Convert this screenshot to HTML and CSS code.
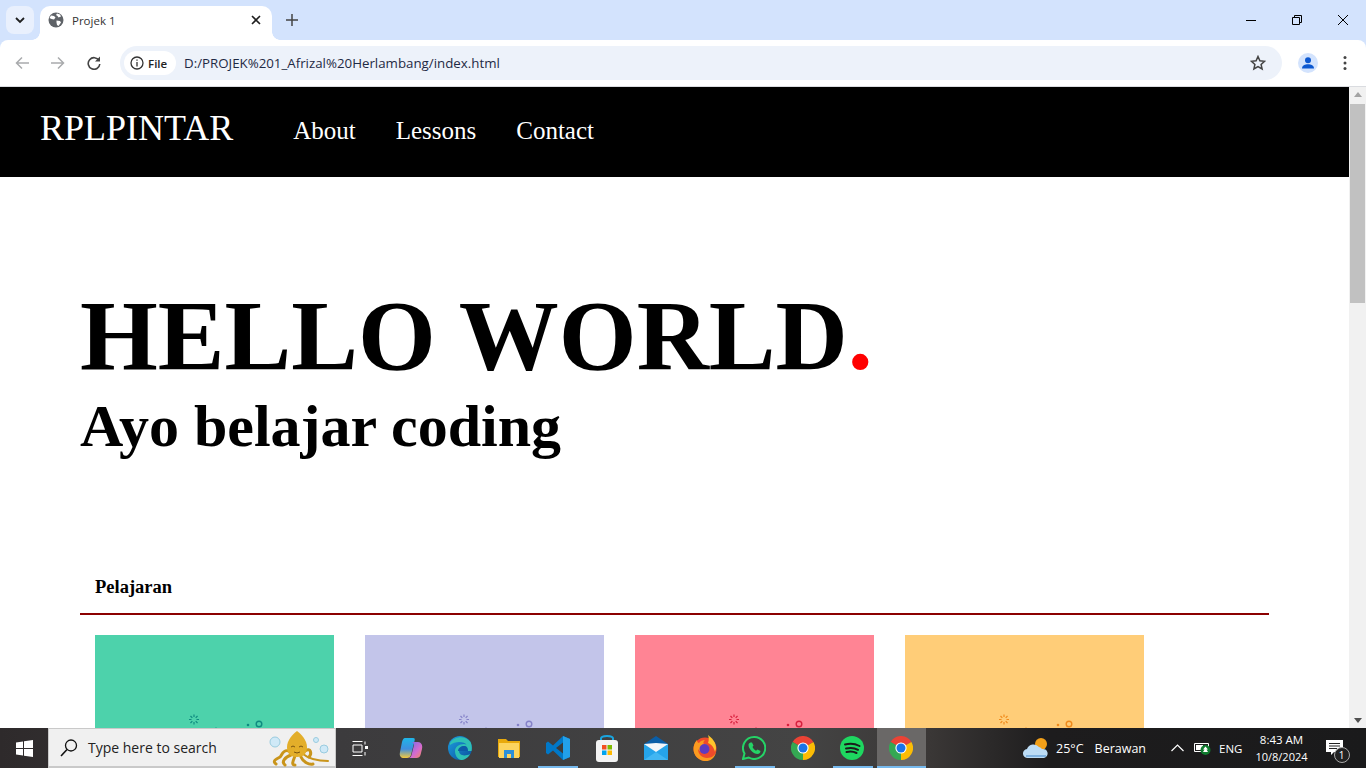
FILE: index.html
```html
<!DOCTYPE html>
<html>
<head>
    <title>Projek 1</title>
    <link rel="stylesheet" href="styles.css">
</head>
<body>
    <svg class="defs" width="0" height="0">
        <symbol id="chrome" viewBox="0 0 24 24">
            <path fill="#ea4335" d="M12 12 L1.600 6 A12 12 0 0 1 22.400 6 Z"/>
            <path fill="#fbbc05" d="M12 12 L22.400 6 A12 12 0 0 1 12 24 Z"/>
            <path fill="#34a853" d="M12 12 L12 24 A12 12 0 0 1 1.600 6 Z"/>
            <circle cx="12" cy="12" r="5.600" fill="#fff"/>
            <circle cx="12" cy="12" r="4.500" fill="#1a73e8"/>
        </symbol>
        <symbol id="deco" viewBox="0 0 240 100">
            <g fill="none" stroke="currentColor" stroke-width="1.200">
                <path d="M99 79.500v2.500M99 87v2.500M94 84.500h2.500M101.500 84.500h2.500M95.500 81l1.800 1.800M100.700 86.200l1.800 1.800M95.500 88l1.800-1.800M100.700 82.800l1.800-1.800"/>
                <circle cx="164" cy="89" r="2.800" stroke-width="1.400"/>
            </g>
            <circle cx="153" cy="90" r="1.300" fill="currentColor"/>
            <circle cx="121" cy="93" r="1" fill="currentColor" opacity=".4"/>
        </symbol>
    </svg>

    <div class="browser">
        <div class="tabstrip">
            <div class="tab-search">
                <svg width="12" height="12" viewBox="0 0 12 12"><path d="M2 4l4 4 4-4" fill="none" stroke="#1f1f1f" stroke-width="1.800"/></svg>
            </div>
            <div class="tab">
                <svg class="tab-icon" width="16" height="16" viewBox="0 0 16 16">
                    <circle cx="8" cy="8" r="7.500" fill="#5f6368"/>
                    <path fill="#fff" d="M3 3.500l3 .5 1.500 1.500L6 7.500 3.500 7 1.500 6zM9 1.500l3 1 1 2-2.500 1-1-1.500-1.500-1zM8.500 8.500l3.500.5 1 1.500-2.500 3.500-1.500-1-.5-2.500z"/>
                </svg>
                <span class="tab-title">Projek 1</span>
                <svg class="tab-close" width="10" height="10" viewBox="0 0 10 10"><path d="M1 1l8 8M9 1l-8 8" stroke="#1f1f1f" stroke-width="1.600"/></svg>
            </div>
            <svg class="new-tab" width="12" height="12" viewBox="0 0 12 12"><path d="M6 0v12M0 6h12" stroke="#444" stroke-width="1.500"/></svg>
            <div class="window-btns">
                <svg width="10" height="10" viewBox="0 0 10 10"><path d="M0 5.500h10" stroke="#000"/></svg>
                <svg width="10" height="10" viewBox="0 0 10 10"><path d="M.5 2.500h7v7h-7zM2.500 2.500v-2h7v7h-2" fill="none" stroke="#000"/></svg>
                <svg width="10" height="10" viewBox="0 0 10 10"><path d="M0 0l10 10M10 0L0 10" stroke="#000"/></svg>
            </div>
        </div>

        <div class="toolbar">
            <svg class="tool-icon first" width="14" height="14" viewBox="0 0 14 14"><path d="M14 7H2M7 1.500L1.500 7 7 12.500" fill="none" stroke="#a9abad" stroke-width="1.500"/></svg>
            <svg class="tool-icon" width="14" height="14" viewBox="0 0 14 14"><path d="M0 7h12M7 1.500L12.500 7 7 12.500" fill="none" stroke="#a9abad" stroke-width="1.500"/></svg>
            <svg class="tool-icon" width="14" height="14" viewBox="0 0 14 14"><path d="M12 4.500A5.800 5.800 0 1 0 12.800 8" fill="none" stroke="#444" stroke-width="1.600"/><path d="M13 .5v5H8z" fill="#444"/></svg>
            <div class="omnibox">
                <div class="chip">
                    <svg width="14" height="14" viewBox="0 0 14 14"><circle cx="7" cy="7" r="6" fill="none" stroke="#333" stroke-width="1.300"/><path d="M7 6v4.500M7 3.500v1.300" stroke="#333" stroke-width="1.300"/></svg>
                    <span>File</span>
                </div>
                <span class="url">D:/PROJEK%201_Afrizal%20Herlambang/index.html</span>
                <svg class="star" width="16" height="16" viewBox="0 0 16 16"><path d="M8 1.500l1.900 4.300 4.600.5-3.400 3.100 1 4.600L8 11.600l-4.100 2.400 1-4.600L1.500 6.300l4.600-.5z" fill="none" stroke="#444" stroke-width="1.500"/></svg>
            </div>
            <div class="profile">
                <svg width="20" height="20" viewBox="0 0 20 20"><circle cx="10" cy="10" r="10" fill="#d3e3fd"/><circle cx="10" cy="7.300" r="3" fill="#0b57d0"/><path d="M4 15.500c0-3 3-4.300 6-4.300s6 1.300 6 4.300z" fill="#0b57d0"/></svg>
            </div>
            <svg class="menu" width="4" height="16" viewBox="0 0 4 16"><circle cx="2" cy="2.500" r="1.500" fill="#444"/><circle cx="2" cy="8" r="1.500" fill="#444"/><circle cx="2" cy="13.500" r="1.500" fill="#444"/></svg>
        </div>

        <div class="viewport">
            <div class="page">
                <nav class="navbar">
                    <a class="logo">RPLPINTAR</a>
                    <ul class="nav-links">
                        <li>About</li>
                        <li>Lessons</li>
                        <li>Contact</li>
                    </ul>
                </nav>

                <section class="hero">
                    <h1>HELLO WORLD<span class="dot">.</span></h1>
                    <h2>Ayo belajar coding</h2>
                </section>

                <section class="lessons">
                    <h3>Pelajaran</h3>
                    <div class="cards">
                        <div class="card green"><svg class="deco"><use href="#deco"/></svg></div>
                        <div class="card purple"><svg class="deco"><use href="#deco"/></svg></div>
                        <div class="card red"><svg class="deco"><use href="#deco"/></svg></div>
                        <div class="card yellow"><svg class="deco"><use href="#deco"/></svg></div>
                    </div>
                </section>
            </div>
            <div class="scrollbar">
                <div class="arrow up"></div>
                <div class="thumb"></div>
                <div class="arrow down"></div>
            </div>
        </div>

        <div class="taskbar">
            <div class="start">
                <svg width="17" height="17" viewBox="0 0 17 17"><path fill="#fff" d="M0 2.400l7-1v6.600H0zM8 1.300L17 0v8H8zM0 9h7v6.600l-7-1zM8 9h9v8l-9-1.300z"/></svg>
            </div>
            <div class="search">
                <svg width="20" height="20" viewBox="0 0 20 20"><circle cx="12" cy="7.500" r="5.500" fill="none" stroke="#111" stroke-width="1.300"/><path d="M8 11.500L2 18" stroke="#111" stroke-width="1.600"/></svg>
                <span>Type here to search</span>
                <svg class="octopus" width="66" height="38" viewBox="0 0 66 38">
                    <circle cx="10" cy="13" r="5" fill="#cfe9f7" stroke="#9accdf"/>
                    <circle cx="51" cy="11" r="2.500" fill="#cfe9f7" stroke="#9accdf"/>
                    <circle cx="59" cy="20" r="4" fill="#cfe9f7" stroke="#9accdf"/>
                    <g fill="none" stroke="#c9941a" stroke-width="3" stroke-linecap="round">
                        <path d="M24 22C18 20 17 26 15 28 11 30 7 32 11 35"/>
                        <path d="M26 26C20 28 16 33 20 36"/>
                        <path d="M30 27C28 32 26 36 30 36"/>
                        <path d="M40 22C46 18 47 25 44 28"/>
                        <path d="M36 28C38 33 44 36 48 35"/>
                    </g>
                    <path d="M38 25C44 30 52 32 63 32" fill="none" stroke="#c9941a" stroke-width="2" stroke-linecap="round"/>
                    <path d="M32 2C36 5 42 11 42 18 42 25 38 28 32 28 26 28 22 25 22 18 22 11 28 5 32 2z" fill="#e3ae2a"/>
                    <path d="M26 18q2-2 4 0M34 18q2-2 4 0M29 23q3 2 6 0" fill="none" stroke="#7a5510"/>
                </svg>
            </div>
            <div class="task-view">
                <svg width="16" height="15" viewBox="0 0 16 15"><path d="M.5 .5h10M.5 14.500h10M1 4h9v7H1z" fill="none" stroke="#fff"/><path d="M13 .5v3M13 11v3.500" stroke="#fff"/><rect x="13" y="5" width="3" height="3" fill="#fff"/></svg>
            </div>
            <div class="apps">
                <div class="app">
                    <svg width="24" height="24" viewBox="0 0 24 24">
                        <defs>
                            <linearGradient id="copa" x1="0" y1="0" x2="0" y2="1"><stop offset="0" stop-color="#1fb6e8"/><stop offset=".55" stop-color="#3f8fe0"/><stop offset="1" stop-color="#f4c93c"/></linearGradient>
                            <linearGradient id="copb" x1="0" y1="0" x2="1" y2="1"><stop offset="0" stop-color="#6a6ae8"/><stop offset=".6" stop-color="#d56bd0"/><stop offset="1" stop-color="#f58a5c"/></linearGradient>
                        </defs>
                        <path d="M6 2h8c2 0 2 1 1.500 3L12 19c-.5 2-2 3-4 3H5c-3 0-5-2-4-6l2-10c.5-2 1.500-4 3-4z" fill="url(#copa)"/>
                        <path d="M12 6h7c3 0 5 3 4 7l-1.500 6c-.5 2-2 3-4 3H9c2 0 3-1 3.500-3L15 9c.3-1.500-1-3-3-3z" fill="url(#copb)"/>
                    </svg>
                </div>
                <div class="app">
                    <svg width="24" height="24" viewBox="0 0 24 24">
                        <defs><linearGradient id="edg" x1="0" y1="0" x2="1" y2="1"><stop offset="0" stop-color="#1d9fe0"/><stop offset="1" stop-color="#0b4f9c"/></linearGradient></defs>
                        <circle cx="12" cy="12" r="12" fill="url(#edg)"/>
                        <path d="M2 7C6 0 18-1 22.500 6 24 9 24 13 23.500 15H11c0 4 5 6 11 3-2 4-6 6-9 6-4-1-6-5-6-9 0-4 4-7 9-7 2 0 3 1 3 1-3-4-12-4-17 0z" fill="#2fc0b5"/>
                        <path d="M10 15c0-3 3-5 6-5 3 0 4 2 4 5z" fill="#0d5ba8"/>
                    </svg>
                </div>
                <div class="app">
                    <svg width="22" height="22" viewBox="0 0 22 22">
                        <path d="M0 2h8l2 2h12v16H0z" fill="#e8a90c"/>
                        <path d="M1 6h20v15H1z" fill="#fcd45f"/>
                        <path d="M6 13h10v8h-3v-4H9v4H6z" fill="#2c8fd8"/>
                    </svg>
                </div>
                <div class="app underlined">
                    <svg width="24" height="24" viewBox="0 0 24 24">
                        <path d="M17 0l7 3v18l-7 3L7 14.500 2 18.500 0 17v-10l2-1.500 5 4z" fill="#0078c8"/>
                        <path d="M17 0l7 3v18l-7 3z" fill="#22a0ea"/>
                        <path d="M17 6.500L10 12l7 5.500z" fill="#3b3b3b"/>
                    </svg>
                </div>
                <div class="app">
                    <svg width="24" height="28" viewBox="0 0 24 28">
                        <path d="M6 7V4.500C6 1 18 1 18 4.500V7" fill="none" stroke="#19a5e0" stroke-width="2"/>
                        <rect x="1" y="6" width="22" height="22" rx="3" fill="#f3f3f3"/>
                        <rect x="7" y="11" width="4.500" height="4.500" fill="#f25022"/>
                        <rect x="12.500" y="11" width="4.500" height="4.500" fill="#7fba00"/>
                        <rect x="7" y="16.500" width="4.500" height="4.500" fill="#00a4ef"/>
                        <rect x="12.500" y="16.500" width="4.500" height="4.500" fill="#ffb900"/>
                    </svg>
                </div>
                <div class="app">
                    <svg width="24" height="24" viewBox="0 0 24 24">
                        <path d="M12 0l12 8v16H0V8z" fill="#0a5ea8"/>
                        <path d="M0 8h24v16H0z" fill="#25a4ea"/>
                        <path d="M0 8l12 8 12-8-12-1z" fill="#f3f6fa"/>
                        <path d="M0 24l12-8 12 8z" fill="#41b6f2"/>
                    </svg>
                </div>
                <div class="app">
                    <svg width="24" height="26" viewBox="0 0 24 26">
                        <circle cx="12" cy="14" r="11.500" fill="#ee4b2b"/>
                        <path d="M.5 14C.5 9 3 6 4 5c0 2 1 3 2 3 1-2 4-3 6-3-2 2-2 3-1 4 3 0 6 3 5 6-3 4-9 3-11-1 0 5 4 9 9 9 5 0 8-3 9-6-1 6-6 10-12 9C5 25 .5 20 .5 14z" fill="#fb9b1f"/>
                        <path d="M15 0c4 3 8 7 8 13 0 2-1 3-1 4-1-5-4-8-7-9 1-3 1-5 0-8z" fill="#fdc52c"/>
                        <circle cx="11.500" cy="14" r="5" fill="#5e3bbf"/>
                    </svg>
                </div>
                <div class="app underlined">
                    <svg width="24" height="24" viewBox="0 0 24 24">
                        <path d="M12 1a11 11 0 0 0-9.500 16.500L1 23l5.700-1.500A11 11 0 1 0 12 1z" fill="#3b3b3b" stroke="#25d366" stroke-width="2"/>
                        <path d="M8.500 6.500l1.500 0 1.500 3-1 1.500c1 2 2 3 3.500 3.700l1.500-1.200 3 1.500c0 2-1.500 3-3 3-4 0-9-5-9-9 0-1 .7-2 2-2.500z" fill="#25d366"/>
                    </svg>
                </div>
                <div class="app"><svg width="24" height="24"><use href="#chrome"/></svg></div>
                <div class="app underlined">
                    <svg width="24" height="24" viewBox="0 0 24 24">
                        <circle cx="12" cy="12" r="12" fill="#1ed760"/>
                        <path d="M5 8.500c5-1.500 10-1 14.500 1.500M6 12.500c4.500-1 8.500-.7 12 1.300M6.500 16c3.500-.8 7-.6 10 1" fill="none" stroke="#1b1b1b" stroke-width="2" stroke-linecap="round"/>
                    </svg>
                </div>
                <div class="app active"><svg width="24" height="24"><use href="#chrome"/></svg></div>
            </div>
            <div class="tray">
                <svg class="weather" width="26" height="24" viewBox="0 0 26 24">
                    <circle cx="18" cy="8" r="6" fill="#f2a019"/>
                    <path d="M5 22a4.500 4.500 0 0 1-1-9 7 7 0 0 1 12-2 4.500 4.500 0 0 1 3 2 4.500 4.500 0 0 1 2 9z" fill="#bcdcf5"/>
                    <path d="M3 20h20" stroke="#7fb2e0" stroke-width="2"/>
                </svg>
                <span class="temp">25°C</span>
                <span class="cond">Berawan</span>
                <svg class="caret" width="13" height="8" viewBox="0 0 13 8"><path d="M.5 7l6-6 6 6" fill="none" stroke="#fff" stroke-width="1.200"/></svg>
                <svg class="battery" width="17" height="14" viewBox="0 0 17 14">
                    <path d="M.5 2.500h14v8H.5z" fill="#1d1d1d" stroke="#fff"/>
                    <path d="M2 4h7v5H2z" fill="#fff"/>
                    <circle cx="11.500" cy="9" r="5" fill="#0f7b2e"/>
                    <path d="M11.500 5.500l2.500 3h-1.500l1.500 2.500h-5l1.500-2.500H9z" fill="#fff"/>
                </svg>
                <span class="lang">ENG</span>
                <div class="clock"><span>8:43 AM</span><span class="date">10/8/2024</span></div>
                <div class="notify">
                    <svg width="17" height="16" viewBox="0 0 17 16"><path d="M0 0h17v12H8l-3 3v-3H0z" fill="#fff"/><path d="M3 3.500h11M3 6h11M3 8.500h8" stroke="#222"/></svg>
                    <span class="badge">1</span>
                </div>
            </div>
        </div>
    </div>
</body>
</html>
```

FILE: styles.css
```css
* {
    box-sizing: border-box;
}
body {
    margin: 0;
    overflow: hidden;
    font-family: "Open Sans", sans-serif;
}
.defs {
    position: absolute;
}
.browser {
    display: flex;
    flex-direction: column;
    height: 100vh;
    background-color: #d3e3fd;
}

/* tab strip */
.tabstrip {
    display: flex;
    align-items: flex-end;
    height: 40px;
    flex: none;
}
.tab-search {
    display: flex;
    align-items: center;
    justify-content: center;
    width: 28px;
    height: 28px;
    margin: 0 6px 6px 6px;
    background-color: #e9f0fd;
    border-radius: 8px;
}
.tab {
    position: relative;
    display: flex;
    align-items: center;
    width: 232px;
    height: 34px;
    padding: 0 11px 6px 8px;
    background-color: #fff;
    border-radius: 10px 10px 0 0;
}
.tab::before,
.tab::after {
    content: "";
    position: absolute;
    bottom: 0;
    width: 8px;
    height: 8px;
}
.tab::before {
    left: -8px;
    background: radial-gradient(circle at 0 0, #d3e3fd 7.500px, #fff 8px);
}
.tab::after {
    right: -8px;
    background: radial-gradient(circle at 100% 0, #d3e3fd 7.500px, #fff 8px);
}
.tab-icon {
    margin-right: 8px;
}
.tab-title {
    flex: 1;
    font-size: 11.500px;
    color: #333;
}
.new-tab {
    margin: 0 0 14px 14px;
}
.window-btns {
    display: flex;
    gap: 36px;
    margin: 0 18px 15px auto;
}

/* toolbar */
.toolbar {
    display: flex;
    align-items: center;
    height: 47px;
    flex: none;
    background-color: #fff;
    border-radius: 8px 8px 0 0;
    border-bottom: 1px solid #dadce0;
}
.tool-icon {
    margin-right: 22px;
}
.tool-icon.first {
    margin-left: 15px;
}
.tool-icon:nth-child(3) {
    margin-right: 19px;
}
.omnibox {
    display: flex;
    align-items: center;
    width: 1162px;
    height: 34px;
    padding: 0 16px 0 4px;
    background-color: #edf2fa;
    border-radius: 17px;
}
.chip {
    display: flex;
    align-items: center;
    gap: 4px;
    width: 52px;
    height: 24px;
    padding-left: 6px;
    background-color: #fff;
    border-radius: 12px;
    font-size: 11.500px;
    font-weight: 600;
    color: #222;
}
.url {
    flex: 1;
    margin-left: 8px;
    font-size: 13.300px;
    color: #1f2a44;
}
.profile {
    display: flex;
    margin-left: 16px;
}
.menu {
    margin-left: 25px;
}

/* page */
.viewport {
    display: flex;
    flex: 1;
    min-height: 0;
    background-color: #fff;
}
.page {
    flex: 1;
    min-width: 0;
    overflow: hidden;
    font-family: "Liberation Serif", "Times New Roman", serif;
}
.navbar {
    display: flex;
    align-items: center;
    height: 90px;
    padding: 0 40px;
    background-color: #000;
    color: #fff;
}
.logo {
    margin-top: -8px;
    font-size: 36px;
}
.nav-links {
    display: flex;
    gap: 40px;
    margin: -2px 0 0 60px;
    padding: 0;
    list-style: none;
    font-size: 25px;
}
.hero {
    height: 400px;
    padding: 101px 80px 0;
}
.hero h1 {
    margin: 0;
    font-size: 100px;
    line-height: 115px;
}
.dot {
    color: red;
}
.hero h2 {
    margin: 0;
    font-size: 60px;
    line-height: 66px;
}
.lessons {
    margin: 0 80px;
}
.lessons h3 {
    margin: 0 0 20px;
    padding: 0 15px 15px;
    font-size: 18.500px;
    line-height: 21px;
    border-bottom: 2px solid #8b0000;
}
.cards {
    display: flex;
    gap: 30.600px;
    padding-left: 15px;
}
.card {
    width: 239.400px;
    height: 200px;
}
.deco {
    display: block;
    width: 240px;
    height: 100px;
}
.green {
    background-color: #4dd2ab;
    color: #0f8b80;
}
.purple {
    background-color: #c3c5ea;
    color: #8582c8;
}
.red {
    background-color: #ff8494;
    color: #d8203e;
}
.yellow {
    background-color: #ffcd78;
    color: #f08a1c;
}

/* scrollbar */
.scrollbar {
    display: flex;
    flex-direction: column;
    align-items: center;
    width: 17px;
    flex: none;
    background-color: #f1f1f1;
}
.arrow {
    flex: none;
    width: 0;
    height: 0;
    border-left: 4px solid transparent;
    border-right: 4px solid transparent;
}
.arrow.up {
    margin: 5px 0 7px;
    border-bottom: 5px solid #a3a3a3;
}
.arrow.down {
    margin: auto 0 5px;
    border-top: 5px solid #505050;
}
.thumb {
    width: 15px;
    height: 199px;
    background-color: #c1c1c1;
}

/* taskbar */
.taskbar {
    display: flex;
    align-items: stretch;
    height: 40px;
    flex: none;
    color: #fff;
    background: linear-gradient(to right, #2e2a2b 0, #3c3b3d 340px, #444 800px, #3a3736 930px, #1d1c1d 1050px, #1a1a1b 100%);
}
.start {
    display: flex;
    align-items: center;
    justify-content: center;
    width: 48px;
}
.search {
    display: flex;
    align-items: center;
    width: 288px;
    padding-left: 10px;
    background-color: #f0f0f0;
    border: 1px solid #c9c9c9;
    border-bottom-width: 2px;
    font-size: 14px;
    color: #222;
}
.search > span {
    flex: 1;
    margin-left: 9px;
}
.octopus {
    margin-right: 4px;
}
.task-view {
    display: flex;
    align-items: center;
    justify-content: center;
    width: 50px;
    padding-right: 2px;
}
.apps {
    display: flex;
}
.app {
    position: relative;
    display: flex;
    align-items: center;
    justify-content: center;
    width: 49.100px;
}
.app.underlined::after {
    content: "";
    position: absolute;
    left: 5px;
    right: 4px;
    bottom: 0;
    height: 2px;
    background-color: #76b9ed;
}
.app.active {
    background-color: #6a6867;
    box-shadow: inset 0 -2px 0 #76b9ed;
}
.tray {
    display: flex;
    align-items: center;
    flex: 1;
    font-size: 12.500px;
}
.weather {
    margin-left: 97px;
}
.temp {
    margin-left: 7px;
}
.cond {
    margin-left: 11px;
}
.caret {
    margin-left: 25px;
}
.battery {
    margin-left: 10px;
}
.lang {
    margin-left: 8px;
    font-size: 11.500px;
}
.clock {
    display: flex;
    flex-direction: column;
    align-items: center;
    gap: 3px;
    margin-left: 13px;
    font-size: 11.500px;
    line-height: 14px;
}
.date {
    font-size: 11px;
}
.notify {
    position: relative;
    margin-left: 18px;
    line-height: 0;
}
.badge {
    position: absolute;
    left: 8px;
    top: 7px;
    width: 16px;
    height: 16px;
    border: 1px solid #aaa;
    border-radius: 50%;
    background-color: #222;
    font-size: 10px;
    line-height: 14px;
    text-align: center;
}
```
